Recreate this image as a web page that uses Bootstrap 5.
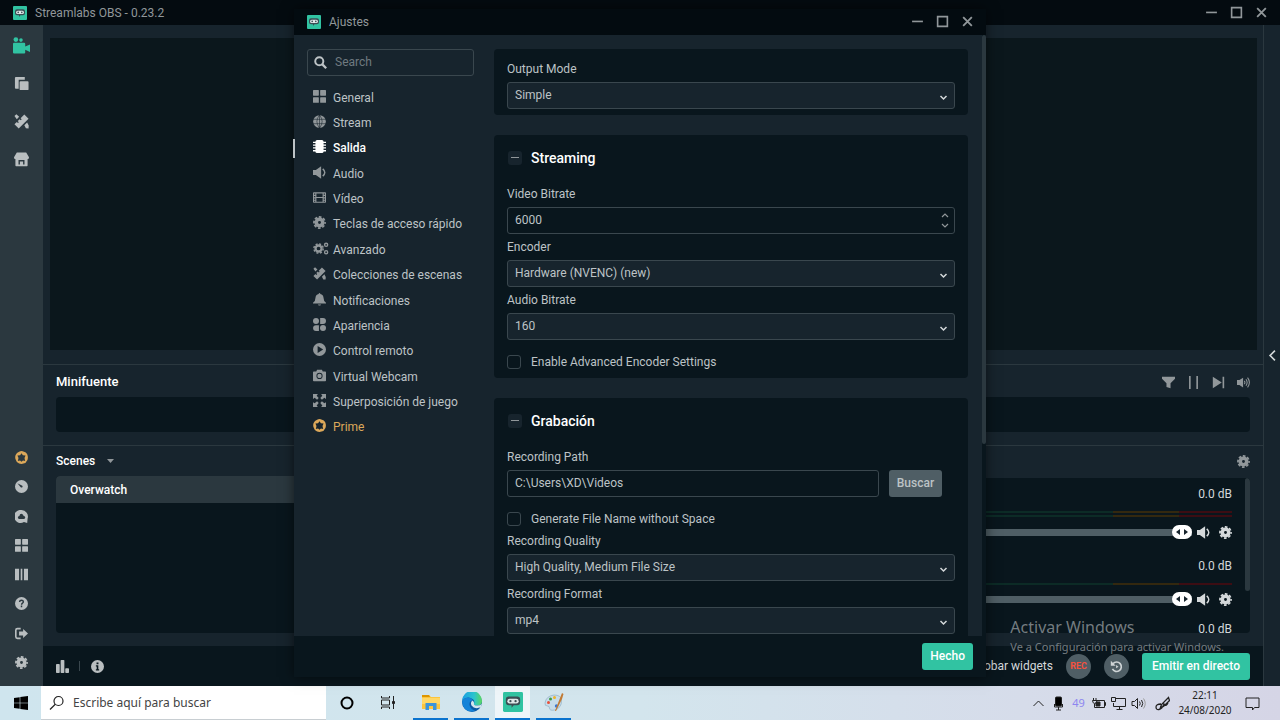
<!DOCTYPE html>
<html lang="es">
<head>
<meta charset="utf-8">
<meta name="viewport" content="width=device-width, initial-scale=1">
<title>Streamlabs OBS</title>
<link rel="stylesheet" href="https://cdn.jsdelivr.net/npm/bootstrap@5.3.0/dist/css/bootstrap.min.css">
<style>
:root{--bg:#17242d;--deep:#09161d;--line:#2b383f;--edge:#3a474e;--ink:#bdc3c6;--muted:#91979a;--teal:#31c3a2;--gold:#dca85a}
body{height:100vh;overflow:hidden;font:12px/20px Roboto,"Liberation Sans",sans-serif;color:var(--ink);background:var(--bg)}
button,input,select{font:inherit;color:inherit}
.plain{background:none;border:0;padding:0;display:inline-flex;align-items:center;justify-content:center;color:inherit}
.ic{width:13px;height:13px;fill:currentColor;flex:none;display:block}
.ic-lg{width:17px;height:17px}
.ic-md{width:15px;height:15px}
.titlebar{height:25px;background:#040b10;padding:0 11px 0 13px;color:#91979a}
.titlebar .plain{width:15px;height:20px}
.logo{width:14px;height:14px;flex:none}
.rail{width:43px;background:var(--line);color:#b9bec0;padding:8px 0 9px}
.rail-top .plain{height:24px}
.rail-low{height:234px}
.rail-low .plain{flex:1}
.preview{background:#0b171c;margin:13px 6px 14px 7px}
.section{border-top:1px solid var(--line);padding:0 13px 13px}
.heading{color:#fff;font-weight:500;font-size:13px;line-height:20px;margin:0}
.studio .heading{font-size:12px}
.well{background:var(--deep);border-radius:4px}
.mini-head{height:32px;padding-top:2px;color:var(--muted)}
.mini-well{height:35px}
.studio{height:201px}
.studio-head{height:30px}
.studio-grid{display:grid;grid-template-columns:repeat(3,minmax(0,1fr));gap:16px;height:157px}
.scene{background:var(--line);color:#fff;font-weight:500;padding:4px 14px 3px;height:27px;border-radius:4px 4px 0 0}
.mixer{margin-top:2px;overflow:hidden;position:relative}
.channel{height:69px;padding:6px 18px 0 8px;color:#d4d8da}
.db{height:20px;text-align:right}
.meter{height:2px;margin-top:2px;background:linear-gradient(90deg,#0c2b26 calc(100% - 119px),#33280f calc(100% - 119px),#33280f calc(100% - 53px),#3c0d13 calc(100% - 53px))}
.meters{padding-top:5px;height:16px}
.meters-2{height:21px}
.channel-1{height:72px}
.fader{appearance:none;-webkit-appearance:none;height:14px;background:none;margin:0;min-width:0}
.fader::-webkit-slider-runnable-track{height:7px;background:#4f5e65}
.fader::-webkit-slider-thumb{-webkit-appearance:none;width:20px;height:14px;margin-top:-4px;border-radius:7px;background:#fff url("data:image/svg+xml,%3Csvg xmlns='http://www.w3.org/2000/svg' width='20' height='14'%3E%3Cpath d='M8 4v6L4 7zM12 4v6l4-3z' fill='%2317242d'/%3E%3C/svg%3E")}
.fader-row{gap:5px}
.mix-scroll{position:absolute;right:0;top:0;width:5px;height:113px;background:var(--line);border-radius:3px}
.statusbar{height:40px;background:var(--deep);padding:0 13px;color:#b9bec0}
.tick{width:1px;height:10px;background:var(--edge)}
.round{width:25px;height:25px;border-radius:50%;background:#4f5e65;border:0;padding:0;display:flex;align-items:center;justify-content:center}
.rec{color:#f5513f;font-size:9px;font-weight:700}
.go{background:var(--teal);color:#fff;border:0;border-radius:3px;height:27px;padding:0 8px;line-height:27px;font-weight:500}
.go-live{min-width:108px}
.done{min-width:50px}
.strip{width:17px;border-left:1px solid var(--line);color:#d4d8da}
/* settings window */
.veil{position:absolute;inset:0;padding:9px 0;z-index:3;pointer-events:none}
.window{width:692px;max-width:100%;background:var(--bg);box-shadow:0 0 12px rgba(0,0,0,.55);pointer-events:auto}
.window .titlebar{height:27px;background:#030b10}
.menu-col{width:200px;padding:14px 20px 0 13px}
.find{height:27px;border:1px solid var(--edge);border-radius:3px;padding:0 6px;margin-bottom:9px}
.find input{background:none;border:0;outline:0;min-width:0;padding:0}
.find input::placeholder{color:#6f7a80;opacity:1}
.menu{min-height:355px;margin:0 0 0 -13px}
.menu a{color:var(--ink);text-decoration:none;flex:1;padding-left:19px;position:relative;white-space:nowrap}
.menu .ic{color:var(--muted);margin:0 7px 3px 0}
.menu .wide{width:16px;margin-right:4px}
.menu a.on,.menu a.on .ic{color:#fff}
.menu a.on{font-weight:500}
.menu a.on::before{content:"";position:absolute;left:-1px;top:3px;width:2px;height:19px;background:#bdc3c6}
.menu a.gold,.menu a.gold .ic{color:var(--gold)}
.panels{padding:14px 14px 0 0;overflow:hidden}
.block{padding:10px 13px 6px;margin-bottom:20px;flex:none}
.block-head{height:26px;margin-bottom:13px;gap:9px;padding-left:1px}
.block-head h2{font-size:14px;line-height:20px;font-weight:500;color:#fff;margin:0}
.fold{width:14px;height:14px;background:var(--bg);border-radius:3px}
.fold::after{content:"";width:8px;height:1px;background:var(--muted)}
.cap{display:block;margin-bottom:3px;height:20px}
.field + .field{margin-top:3px}
.window .form-control,.window .form-select{height:27px;min-height:27px;padding:0 7px;border:1px solid var(--edge);border-radius:3px;color:var(--ink);font-size:12px;line-height:20px;background-color:var(--deep)}
.window .form-select{background-color:var(--bg);background-position:right 6px top 10px;background-size:9px 9px;background-image:url("data:image/svg+xml,%3Csvg xmlns='http://www.w3.org/2000/svg' viewBox='0 0 9 9'%3E%3Cpath d='M1.5 3l3 3 3-3' fill='none' stroke='%23d4d8da' stroke-width='1.5'/%3E%3C/svg%3E")}
.spin{position:absolute;right:6px;top:5px;width:8px;height:18px;color:var(--muted)}
input[type=number]{appearance:textfield;-moz-appearance:textfield}
input[type=number]::-webkit-inner-spin-button{display:none}
.check{gap:10px;margin-top:12px;height:20px}
.check + .field{margin-top:2px}
.check input{appearance:none;width:14px;height:14px;border:1px solid var(--edge);border-radius:3px;margin:0}
.browse{background:#4f5e65;color:var(--ink);border:0;border-radius:3px;height:27px;width:53px;padding:0;line-height:24px;font-weight:500}
.bar{width:4px;background:var(--deep)}
.bar div{height:68%;background:var(--line);border-radius:2px}
.window-foot{height:41px;background:var(--deep);padding:7px 13px}
.notice{position:absolute;right:56px;bottom:30px;z-index:2;color:#747c80;font-family:"Noto Sans","Open Sans",sans-serif;font-size:11px;line-height:18px;pointer-events:none;white-space:nowrap}
.notice strong{display:block;font-weight:400;font-size:16px;line-height:22px}
/* desktop bar */
.taskbar{height:34px;background:linear-gradient(90deg,#cfe5ee,#d3e5ed 50%,#d6dcea 80%,#d5d5e6);color:#222;font-family:"Noto Sans","Open Sans",sans-serif}
.start{width:41px;color:#000}
.ask{width:285px;background:#fff;border-bottom:1px solid #c8ced2;padding:0 8px;gap:8px}
.ask input{border:0;outline:0;padding:0;min-width:0;font-size:12px}
.ask input::placeholder{color:#444;opacity:1}
.app{width:41px;border-bottom:2px solid transparent}
.app.run{width:35px;margin:0 3px;border-bottom-color:#0a73ce}
.app.front{background:#eef5f9}
.app svg{width:20px;height:20px}
.tray{gap:5px;padding-right:20px}
.tray svg{width:15px;height:15px;fill:none;stroke:#222;stroke-width:1}
.tray .temp{color:#8d86f0;font-size:11px;width:15px;text-align:center}
.clock{font-size:10px;line-height:15px;width:60px;text-align:center;margin-right:5px}
</style>
</head>
<body class="d-flex flex-column">
<svg class="d-none" aria-hidden="true">
 <symbol id="logo" viewBox="0 0 14 14"><rect width="14" height="14" rx="1" fill="#31c3a2"/><path d="M4 3.200h6a2 2 0 0 1 2 2v2a2 2 0 0 1-2 2H7.500L6 11V9.200H4a2 2 0 0 1-2-2v-2a2 2 0 0 1 2-2z" fill="#3a4d54"/><rect x="3" y="4.700" width="8" height="3.400" rx="1.700" fill="#dfe6e8"/><circle cx="5.200" cy="6.400" r=".8" fill="#3a4d54"/><circle cx="8.800" cy="6.400" r=".8" fill="#3a4d54"/></symbol>
 <symbol id="min" viewBox="0 0 12 12"><path d="M1 5.200h10v1.500H1z"/></symbol>
 <symbol id="max" viewBox="0 0 12 12"><path d="M1.500 1.500h9v9h-9z" fill="none" stroke="currentColor" stroke-width="1.500"/></symbol>
 <symbol id="close" viewBox="0 0 12 12"><path d="M2 2l8 8M10 2l-8 8" stroke="currentColor" stroke-width="1.700"/></symbol>
 <symbol id="cam" viewBox="0 0 16 16"><circle cx="2.700" cy="2.400" r="2.200"/><circle cx="7.500" cy="2.900" r="1.700"/><path d="M0 6.500Q0 5.500 1 5.500h9.500q1 0 1 1v2.500L16 7v7l-4.500-2v2.500q0 1-1 1H1q-1 0-1-1z"/></symbol>
 <symbol id="copy" viewBox="0 0 16 16"><path d="M2 1h9.500v3H5v9.500H2q-1 0-1-1V2q0-1 1-1zM7 5.500h7.500q1 0 1 1V14q0 1-1 1H7q-1 0-1-1V6.500q0-1 1-1z"/></symbol>
 <symbol id="tools" viewBox="0 0 16 16"><path d="M.5 11L3 8.500l1.200 1.200 1-1L4 7.500l2-2 1.200 1.200 1-1L7 4.500 11 .5 15.500 5 5 15.500z"/><path d="M.5 2L2.500.3 5.500 3 3 5.500zM11 12l3-3 1.700 3.200-.2 3.300-2.800-.2z"/></symbol>
 <symbol id="shop" viewBox="0 0 16 16"><path fill-rule="evenodd" d="M3 .5h10l3 5c0 1.500-.8 2-1.500 2v7q0 .8-.8.8H2.300q-.8 0-.8-.8v-7C.800 7.500 0 7 0 5.500zM4.800 8.500v4.700h1.500v-3h3.400v3h1.500V8.500z"/></symbol>
 <symbol id="prime" viewBox="0 0 16 16"><path fill-rule="evenodd" d="M5 .8Q8-.8 11 .8 15 2 15.500 5.500q.8 3-.2 5.500Q13.500 15 10.500 15.500q-3 .8-5.500-.2Q1.500 14 .8 10.500-.3 7.500.8 5 2 1.700 5 .8zM8 2.800L6.300 5.100 3 5.600l1.300 3-.8 3.700 2.700-.5L8 13.300l1.800-1.500 2.700.5-.8-3.700 1.300-3-3.300-.5z"/></symbol>
 <symbol id="dial" viewBox="0 0 16 16"><path fill-rule="evenodd" d="M8 0a8 8 0 1 1 0 16A8 8 0 0 1 8 0zM3 4l4 5c1.700 1 3-.8 2-2z"/></symbol>
 <symbol id="cloud" viewBox="0 0 16 16"><path fill-rule="evenodd" d="M8 0a8 8 0 0 1 7.500 10.500L15 16l-4-1.200A8 8 0 1 1 8 0zM5 11h6q1.800-.5 1.500-2-.3-1.600-1.800-1.600Q10 4.600 8 4.500 5.700 4.600 5.400 7.300 3.500 7.500 3.500 9.200 3.600 10.800 5 11z"/></symbol>
 <symbol id="grid" viewBox="0 0 16 16"><rect width="7.200" height="7" rx=".7"/><rect x="8.800" width="7.200" height="7" rx=".7"/><rect y="8.800" width="7.200" height="7" rx=".7"/><rect x="8.800" y="8.800" width="7.200" height="7" rx=".7"/></symbol>
 <symbol id="cols" viewBox="0 0 16 16"><path d="M0 1h5v14H0zM7 1h2v14H7zM11 1h5v14h-5z"/></symbol>
 <symbol id="help" viewBox="0 0 16 16"><circle cx="8" cy="8" r="8"/><path d="M5.600 6.200q.2-2.200 2.400-2.200t2.300 1.900q0 1-1.100 1.700-1.100.7-1.100 1.800M8 10.500v2" fill="none" stroke="#2b383f" stroke-width="1.800"/></symbol>
 <symbol id="exit" viewBox="0 0 16 16"><path d="M7 2H3Q1 2 1 4v8q0 2 2 2h4" fill="none" stroke="currentColor" stroke-width="2"/><path d="M5 5.500h5V2.500L16 8l-6 5.500v-3H5z"/></symbol>
 <symbol id="gear" viewBox="0 0 16 16"><circle cx="8" cy="8" r="4" fill="none" stroke="currentColor" stroke-width="4.400"/><circle cx="8" cy="8" r="6.800" fill="none" stroke="currentColor" stroke-width="2.200" stroke-dasharray="3.300 2.040" stroke-dashoffset="1.650"/></symbol>
 <symbol id="bars" viewBox="0 0 16 16"><rect y="5" width="4.600" height="11" rx="1"/><rect x="5.700" y="0" width="4.600" height="16" rx="1"/><rect x="11.400" y="10" width="4.600" height="6" rx="1"/></symbol>
 <symbol id="info" viewBox="0 0 16 16"><path fill-rule="evenodd" d="M8 0a8 8 0 1 1 0 16A8 8 0 0 1 8 0zM6.800 3v2.200h2.400V3zM6 6.500V8h1v3.500H6V13h4v-1.500H9v-5z"/></symbol>
 <symbol id="filter" viewBox="0 0 16 16"><path d="M0 1h16v2.500L10.500 9v6l-5-1.500V9L0 3.500z"/></symbol>
 <symbol id="pause" viewBox="0 0 16 16"><path d="M2.500 0h2v16h-2zM11.500 0h2v16h-2z"/></symbol>
 <symbol id="next" viewBox="0 0 16 16"><path d="M1 1l11 7-11 7zM13 1h2v14h-2z"/></symbol>
 <symbol id="vol" viewBox="0 0 16 16"><path d="M0 4.800h3.500L10 .3v15.400l-6.500-4.500H0z"/><path d="M12 3.500q5 4.500 0 9" fill="none" stroke="currentColor" stroke-width="1.800"/></symbol>
 <symbol id="vol3" viewBox="0 0 16 16"><path d="M0 5h3l4.500-3v12L3 11H0z"/><path d="M9 6q1.500 2 0 4M11 4q3 4 0 8M13 2q4.500 6 0 12" fill="none" stroke="currentColor" stroke-width="1.300"/></symbol>
 <symbol id="replay" viewBox="0 0 16 16"><path d="M3.800 4.500A5.800 5.800 0 1 1 3 11" fill="none" stroke="#cfd4d6" stroke-width="2"/><path d="M1 1v6h6zM7.500 6.200l3 2-3 2z" fill="#cfd4d6"/></symbol>
 <symbol id="left" viewBox="0 0 16 16"><path d="M11 2L5 8l6 6" fill="none" stroke="currentColor" stroke-width="2"/></symbol>
 <symbol id="search" viewBox="0 0 16 16"><circle cx="6.500" cy="6.500" r="5" fill="none" stroke="currentColor" stroke-width="2.400"/><path d="M10 10l5 5" stroke="currentColor" stroke-width="2.800"/></symbol>
 <symbol id="globe" viewBox="0 0 16 16"><circle cx="8" cy="8" r="7.800"/><path d="M0 5.300h16M0 10.700h16M8 0v16M8 0Q1.500 8 8 16M8 0q6.500 8 0 16" fill="none" stroke="#17242d" stroke-width=".7"/></symbol>
 <symbol id="chip" viewBox="0 0 16 16"><rect x="3" width="10" height="16" rx="2"/><path d="M0 2.200h16v1.600H0zM0 5.600h16v1.600H0zM0 9h16v1.600H0zM0 12.400h16V14H0z"/></symbol>
 <symbol id="film" viewBox="0 0 16 16"><path fill-rule="evenodd" d="M1 1.500h14q1 0 1 1v11q0 1-1 1H1q-1 0-1-1v-11q0-1 1-1zM1.300 3v1.700h1.500V3zm0 3.200v1.500h1.500V6.200zm0 3v1.500h1.500V9.200zm0 2.800v1.300h1.500V12zM4.200 3v4.300h7.600V3zm0 5.700v4.600h7.600V8.700zM13.200 3v1.700h1.500V3zm0 3.200v1.500h1.500V6.200zm0 3v1.500h1.500V9.200zm0 2.800v1.300h1.500V12z"/></symbol>
 <symbol id="gears" viewBox="0 0 19 16"><circle cx="6.500" cy="8" r="3.700" fill="none" stroke="currentColor" stroke-width="2.800"/><circle cx="6.500" cy="8" r="5.700" fill="none" stroke="currentColor" stroke-width="1.800" stroke-dasharray="2.500 1.980"/><circle cx="15.800" cy="3.500" r="1.900" fill="none" stroke="currentColor" stroke-width="1.700"/><circle cx="15.800" cy="12.500" r="1.900" fill="none" stroke="currentColor" stroke-width="1.700"/></symbol>
 <symbol id="bell" viewBox="0 0 16 16"><path d="M8 0q1 0 1 1.200Q12.700 2 13 6q0 4 3 6v1H0v-1q3-2 3-6 .3-4 4-4.800Q7 0 8 0zM6 14h4q-2 3-4 0z"/></symbol>
 <symbol id="four" viewBox="0 0 16 16"><circle cx="3.700" cy="3.700" r="3.700"/><path d="M8.800 0h3.500a3.700 3.700 0 0 1 0 7.400H8.800zM3.700 8.800H7.300V16H3.700a3.600 3.600 0 0 1 0-7.200z"/><circle cx="12.300" cy="12.300" r="3.700"/></symbol>
 <symbol id="play" viewBox="0 0 16 16"><path fill-rule="evenodd" d="M8 0a8 8 0 1 1 0 16A8 8 0 0 1 8 0zM5.700 3.800v8.400L12.500 8z"/></symbol>
 <symbol id="photo" viewBox="0 0 16 16"><path fill-rule="evenodd" d="M5 1h6l1 2h3q1 0 1 1v10q0 1-1 1H1q-1 0-1-1V4q0-1 1-1h3zM8 4.700a3.800 3.800 0 1 0 0 7.600 3.800 3.800 0 1 0 0-7.600z"/><circle cx="8" cy="8.500" r="2.700"/></symbol>
 <symbol id="expand" viewBox="0 0 16 16"><path d="M0 0h6L4.500 2 7 5 5 7 2 4.500 0 6zM16 0v6l-2-1.500L11 7 9 5l2.500-3L10 0zM0 16v-6l2 1.500L5 9l2 2-2.500 3L6 16zM16 16h-6l1.500-2L9 11l2-2 3 2.500 2-1.500z"/></symbol>
</svg>

<div class="position-relative flex-grow-1 d-flex flex-column" style="min-height:0">
 <header class="titlebar d-flex align-items-center">
  <svg class="logo me-2"><use href="#logo"/></svg><span>Streamlabs OBS - 0.23.2</span>
  <div class="ms-auto d-flex" style="gap:10px">
   <button class="plain" aria-label="Minimizar"><svg class="ic"><use href="#min"/></svg></button>
   <button class="plain" aria-label="Maximizar"><svg class="ic"><use href="#max"/></svg></button>
   <button class="plain" aria-label="Cerrar"><svg class="ic"><use href="#close"/></svg></button>
  </div>
 </header>
 <div class="d-flex flex-grow-1" style="min-height:0">
  <nav class="rail d-flex flex-column justify-content-between" aria-label="Principal">
   <div class="rail-top d-flex flex-column" style="gap:14px">
    <button class="plain" aria-label="Editor" style="color:#31c3a2"><svg class="ic ic-lg"><use href="#cam"/></svg></button>
    <button class="plain" aria-label="Temas"><svg class="ic ic-md"><use href="#copy"/></svg></button>
    <button class="plain" aria-label="Herramientas"><svg class="ic ic-md"><use href="#tools"/></svg></button>
    <button class="plain" aria-label="Tienda"><svg class="ic ic-md"><use href="#shop"/></svg></button>
   </div>
   <div class="rail-low d-flex flex-column">
    <button class="plain" aria-label="Prime" style="color:#dca85a"><svg class="ic"><use href="#prime"/></svg></button>
    <button class="plain" aria-label="Panel"><svg class="ic"><use href="#dial"/></svg></button>
    <button class="plain" aria-label="Cloudbot"><svg class="ic"><use href="#cloud"/></svg></button>
    <button class="plain" aria-label="Diseño"><svg class="ic"><use href="#grid"/></svg></button>
    <button class="plain" aria-label="Columnas"><svg class="ic"><use href="#cols"/></svg></button>
    <button class="plain" aria-label="Ayuda"><svg class="ic"><use href="#help"/></svg></button>
    <button class="plain" aria-label="Salir"><svg class="ic"><use href="#exit"/></svg></button>
    <button class="plain" aria-label="Ajustes"><svg class="ic"><use href="#gear"/></svg></button>
   </div>
  </nav>
  <main class="flex-grow-1 d-flex flex-column" style="min-width:0">
   <div class="preview flex-grow-1"></div>
   <section class="section">
    <div class="mini-head d-flex align-items-center justify-content-between">
     <h2 class="heading">Minifuente</h2>
     <div class="d-flex" style="gap:12px">
      <button class="plain" aria-label="Filtrar"><svg class="ic"><use href="#filter"/></svg></button>
      <button class="plain" aria-label="Pausar"><svg class="ic"><use href="#pause"/></svg></button>
      <button class="plain" aria-label="Siguiente"><svg class="ic"><use href="#next"/></svg></button>
      <button class="plain" aria-label="Volumen"><svg class="ic"><use href="#vol3"/></svg></button>
     </div>
    </div>
    <div class="well mini-well"></div>
   </section>
   <section class="section studio">
    <div class="studio-head d-flex align-items-center">
     <h2 class="heading">Scenes</h2>
     <button class="plain ms-2 ps-1" aria-label="Elegir colección"><svg width="7" height="4"><path d="M0 0h7L3.500 4z" fill="#91979a"/></svg></button>
     <button class="plain ms-auto" aria-label="Ajustes del mezclador" style="color:#91979a"><svg class="ic"><use href="#gear"/></svg></button>
    </div>
    <div class="studio-grid">
     <div class="well"><div class="scene">Overwatch</div></div>
     <div class="well"></div>
     <div class="well mixer">
      <div class="channel channel-1"><div class="db">0.0 dB</div>
       <div class="meters meters-2"><div class="meter"></div><div class="meter"></div></div>
       <div class="fader-row d-flex align-items-center"><input class="fader flex-grow-1" type="range" value="100" aria-label="Volumen 1"><svg class="ic"><use href="#vol"/></svg><svg class="ic ms-1"><use href="#gear"/></svg></div>
      </div>
      <div class="channel"><div class="db">0.0 dB</div>
       <div class="meters"><div class="meter"></div></div>
       <div class="fader-row d-flex align-items-center"><input class="fader flex-grow-1" type="range" value="100" aria-label="Volumen 2"><svg class="ic"><use href="#vol"/></svg><svg class="ic ms-1"><use href="#gear"/></svg></div>
      </div>
      <div class="channel pt-0"><div class="db">0.0 dB</div></div>
      <div class="mix-scroll"></div>
     </div>
    </div>
   </section>
   <footer class="statusbar d-flex align-items-center">
    <svg class="ic"><use href="#bars"/></svg>
    <span class="tick" style="margin:0 11px 0 10px"></span><svg class="ic"><use href="#info"/></svg>
    <button class="plain ms-auto" style="color:#d4d8da;margin-right:13px">Probar widgets</button>
    <button class="round rec" style="margin-right:13px">REC</button>
    <button class="round" aria-label="Repetición" style="margin-right:13px"><svg class="ic"><use href="#replay"/></svg></button>
    <button class="go go-live">Emitir en directo</button>
   </footer>
  </main>
  <aside class="strip d-flex align-items-center justify-content-center"><button class="plain" aria-label="Abrir chat"><svg class="ic"><use href="#left"/></svg></button></aside>
 </div>

 <div class="notice"><strong>Activar Windows</strong>Ve a Configuración para activar Windows.</div>

 <div class="veil d-flex justify-content-center">
  <div class="window d-flex flex-column" role="dialog" aria-label="Ajustes">
   <header class="titlebar d-flex align-items-center">
    <svg class="logo me-2"><use href="#logo"/></svg><span>Ajustes</span>
    <div class="ms-auto d-flex" style="gap:10px">
     <button class="plain" aria-label="Minimizar"><svg class="ic"><use href="#min"/></svg></button>
     <button class="plain" aria-label="Maximizar"><svg class="ic"><use href="#max"/></svg></button>
     <button class="plain" aria-label="Cerrar"><svg class="ic"><use href="#close"/></svg></button>
    </div>
   </header>
   <div class="d-flex flex-grow-1" style="min-height:0">
    <div class="menu-col flex-shrink-0">
     <label class="find d-flex align-items-center gap-2"><svg class="ic"><use href="#search"/></svg><input type="search" placeholder="Search" aria-label="Search"></label>
     <nav class="menu d-flex flex-column" aria-label="Ajustes">
      <a href="#" class="d-flex align-items-center"><svg class="ic"><use href="#grid"/></svg>General</a>
      <a href="#" class="d-flex align-items-center"><svg class="ic"><use href="#globe"/></svg>Stream</a>
      <a href="#" class="d-flex align-items-center on"><svg class="ic"><use href="#chip"/></svg>Salida</a>
      <a href="#" class="d-flex align-items-center"><svg class="ic"><use href="#vol"/></svg>Audio</a>
      <a href="#" class="d-flex align-items-center"><svg class="ic"><use href="#film"/></svg>Vídeo</a>
      <a href="#" class="d-flex align-items-center"><svg class="ic"><use href="#gear"/></svg>Teclas de acceso rápido</a>
      <a href="#" class="d-flex align-items-center"><svg class="ic wide"><use href="#gears"/></svg>Avanzado</a>
      <a href="#" class="d-flex align-items-center"><svg class="ic"><use href="#tools"/></svg>Colecciones de escenas</a>
      <a href="#" class="d-flex align-items-center"><svg class="ic"><use href="#bell"/></svg>Notificaciones</a>
      <a href="#" class="d-flex align-items-center"><svg class="ic"><use href="#four"/></svg>Apariencia</a>
      <a href="#" class="d-flex align-items-center"><svg class="ic"><use href="#play"/></svg>Control remoto</a>
      <a href="#" class="d-flex align-items-center"><svg class="ic"><use href="#photo"/></svg>Virtual Webcam</a>
      <a href="#" class="d-flex align-items-center"><svg class="ic"><use href="#expand"/></svg>Superposición de juego</a>
      <a href="#" class="d-flex align-items-center gold"><svg class="ic"><use href="#prime"/></svg>Prime</a>
     </nav>
    </div>
    <form class="panels flex-grow-1 d-flex flex-column">
     <section class="well block">
      <div class="field"><label class="cap" for="mode">Output Mode</label><select id="mode" class="form-select"><option>Simple</option></select></div>
     </section>
     <section class="well block">
      <div class="block-head d-flex align-items-center"><button type="button" class="plain fold" aria-label="Contraer Streaming"></button><h2>Streaming</h2></div>
      <div class="field"><label class="cap" for="vb">Video Bitrate</label><div class="position-relative"><input id="vb" type="number" class="form-control" value="6000"><svg class="spin" viewBox="0 0 8 18" fill="none" stroke="currentColor" stroke-width="1.200"><path d="M1 5l3-3 3 3M1 12l3 3 3-3"/></svg></div></div>
      <div class="field"><label class="cap" for="enc">Encoder</label><select id="enc" class="form-select"><option>Hardware (NVENC) (new)</option></select></div>
      <div class="field"><label class="cap" for="ab">Audio Bitrate</label><select id="ab" class="form-select"><option>160</option></select></div>
      <label class="check d-flex align-items-center"><input type="checkbox"><span>Enable Advanced Encoder Settings</span></label>
     </section>
     <section class="well block">
      <div class="block-head d-flex align-items-center"><button type="button" class="plain fold" aria-label="Contraer Grabación"></button><h2>Grabación</h2></div>
      <div class="field"><label class="cap" for="path">Recording Path</label><div class="d-flex" style="gap:10px;padding-right:13px"><input id="path" class="form-control" value="C:\Users\XD\Videos"><button type="button" class="browse flex-shrink-0">Buscar</button></div></div>
      <label class="check d-flex align-items-center"><input type="checkbox"><span>Generate File Name without Space</span></label>
      <div class="field"><label class="cap" for="rq">Recording Quality</label><select id="rq" class="form-select"><option>High Quality, Medium File Size</option></select></div>
      <div class="field"><label class="cap" for="rf">Recording Format</label><select id="rf" class="form-select"><option>mp4</option></select></div>
     </section>
    </form>
    <div class="bar"><div></div></div>
   </div>
   <footer class="window-foot text-end"><button class="go done">Hecho</button></footer>
  </div>
 </div>
</div>

<footer class="taskbar d-flex flex-shrink-0">
 <button class="plain start" aria-label="Inicio"><svg width="14" height="14" viewBox="0 0 14 14"><path d="M0 2l5.700-.8v5.500H0zM6.300 1.100L14 0v6.700H6.300zM0 7.300h5.700v5.500L0 12zM6.300 7.300H14V14l-7.700-1.100z"/></svg></button>
 <label class="ask d-flex align-items-center"><svg width="16" height="16" viewBox="0 0 16 16" fill="none" stroke="#222" stroke-width="1.200"><circle cx="9.500" cy="6" r="4.500"/><path d="M6.300 9.300L1 14.500"/></svg><input class="flex-grow-1" type="text" placeholder="Escribe aquí para buscar" aria-label="Buscar en Windows"></label>
 <button class="plain app" aria-label="Cortana"><svg viewBox="0 0 20 20"><circle cx="10" cy="11" r="5.500" fill="none" stroke="#000" stroke-width="2"/></svg></button>
 <button class="plain app" aria-label="Vista de tareas"><svg viewBox="0 0 20 20" fill="none" stroke="#222"><path d="M3.500 4v2h8V4M3.500 17v-2h8v2M3.500 8h8v5h-8zM15.500 4v13"/><path d="M14.500 9.500h2v2h-2z" fill="#222"/></svg></button>
 <button class="plain app run" aria-label="Explorador" style="margin-left:5px"><svg viewBox="0 0 20 20"><path d="M1 3h7l2 2h9v12H1z" fill="#fcc53d"/><path d="M1 3h7l1 2H1z" fill="#dd9500"/><path d="M1 6h18v6H1z" fill="#ffd766"/><path d="M4.500 18v-7h11v7h-3.500v-4H8v4z" fill="#3b94db"/></svg></button>
 <button class="plain app run" aria-label="Edge"><svg viewBox="0 0 20 20"><defs><linearGradient id="e1" x1="0" x2="1"><stop stop-color="#1b9de2"/><stop offset=".6" stop-color="#2cc4cf"/><stop offset="1" stop-color="#5bd85e"/></linearGradient></defs><circle cx="10" cy="10" r="10" fill="#0c59a4"/><path d="M0 9A10 10 0 0 1 20 9q0 4.500-5 4.500-3.500 0-3-2 1-2-.8-4Q5 3 0 9z" fill="url(#e1)"/><path d="M0 10Q1 6 6 5.500q4 .3 4.500 3-3.500.5-3 4.500 1 4.500 6 6Q2 22 0 10z" fill="#1583d8"/><path d="M10.500 8.500q-2.500 2-1 5 3 4 8 2l1 .2 1.500-3.700q-2 1.700-5 1.600-3.500 0-3-2 .5-1.600-1.500-3.100z" fill="#d3e5ed"/></svg></button>
 <button class="plain app run front" aria-label="Streamlabs OBS"><svg viewBox="0 0 14 14"><use href="#logo"/></svg></button>
 <button class="plain app run" aria-label="Paint"><svg viewBox="0 0 20 20"><path d="M1 11Q2 4 10 3q7 0 7.500 5 .5 8-7 10-5 1-5-2 0-2-2-2-3 0-2.500-3z" fill="#c6dcea" stroke="#8fb0c6" stroke-width=".7"/><circle cx="4.500" cy="10.500" r="1.500" fill="#e8503a"/><circle cx="6.500" cy="7" r="1.500" fill="#3f9b45"/><circle cx="10.500" cy="5.500" r="1.500" fill="#f0b429"/><circle cx="12.500" cy="14" r="1.700" fill="#3d78cf"/><path d="M11 19l5-13 2-5 1.500 1-1.500 5-6 12z" fill="#c27b35"/></svg></button>
 <div class="tray ms-auto d-flex align-items-center">
  <svg viewBox="0 0 15 15"><path d="M2.500 10l5-5 5 5"/></svg>
  <svg class="ms-auto" viewBox="0 0 15 15"><rect x="4.500" y="1" width="6" height="9" rx="1" fill="#000"/><path d="M3.500 8v3h8V8M7.500 11v3M5 14h5"/></svg>
  <span class="temp">49</span>
  <svg viewBox="0 0 15 15"><path d="M4 4.500h9.500v7H3.500V8M13.500 6.500h1v3h-1M2.500 2v2M5 2v2M1.500 4.500H6q0 3-2.200 3T1.500 4.500"/><path d="M5 6h4v4H5z" fill="#222"/></svg>
  <svg viewBox="0 0 15 15"><path d="M4.500 2.500h10v8h-12V7M8.500 10.500v3M5.500 13.500h6M.5 1.500h4v4h-4z"/></svg>
  <svg viewBox="0 0 15 15"><path d="M1 5.500h2.500l3-3v10l-3-3H1zM8.500 5.500q1.500 2 0 4M10.500 4q2.500 3.500 0 7"/><path d="M12.500 2.500q3.500 5 0 10" stroke="#999"/></svg>
  <svg viewBox="0 0 15 15" class="ms-1"><path d="M13.500 1.500l-7 7-1 3 3-1 6-6zM6 8Q1 8 1 11t3 2.500Q7 13 9 8q2 3 4-1" stroke-width="1.300"/></svg>
  <div class="clock">22:11<br>24/08/2020</div>
  <svg viewBox="0 0 15 15"><path d="M1 2h13v9.500H9.500L7.500 14v-2.500H1z"/></svg>
 </div>
</footer>
<script src="https://cdn.jsdelivr.net/npm/bootstrap@5.3.0/dist/js/bootstrap.bundle.min.js"></script>
</body>
</html>
